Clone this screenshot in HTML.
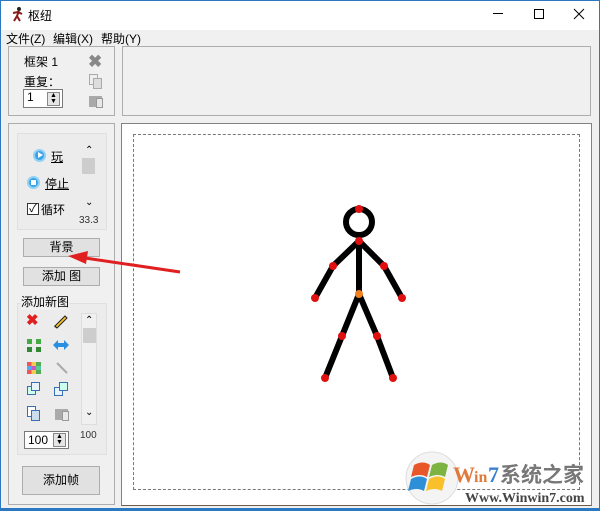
<!DOCTYPE html>
<html><head><meta charset="utf-8">
<style>
*{margin:0;padding:0;box-sizing:border-box}
body{width:600px;height:511px;background:#f0f0f0;position:relative;overflow:hidden;font-family:"Liberation Sans","Noto Sans CJK SC",sans-serif;font-size:12px;color:#000}
.a{position:absolute}
.frame{border:1px solid #adadad}
.btn{position:absolute;background:#e1e1e1;border:1px solid #adadad;text-align:center;font-size:12px}
.spin{position:absolute;background:#fff;border:1px solid #7a7a7a;font-size:12px;padding-left:3px}
.spin i{position:absolute;right:2px;top:2px;width:13px;height:14px;border:1px solid #888;background:#e5e5e5;font-style:normal;font-size:7px;line-height:6px;text-align:center}
</style></head><body>
<div class="a" style="left:0;top:0;width:600px;height:30px;background:#fff"></div>
<div class="a" style="left:0;top:0;width:1px;height:511px;background:#2b79c2"></div>
<div class="a" style="right:0;top:0;width:1px;height:511px;background:#2b79c2"></div>
<div class="a" style="left:0;top:0;width:600px;height:1px;background:#2b79c2"></div>
<div class="a" style="left:0;bottom:0;width:600px;height:3px;background:#2b79c2"></div>
<svg class="a" style="left:10px;top:6px" width="14" height="16"><circle cx="9" cy="3" r="2" fill="#222"/><path d="M9 5 L7 10 L4 15 M7 10 L10 15 M8 6 L3 7 M8 6 L12 8" stroke="#8b1a1a" stroke-width="2" fill="none"/></svg>
<div class="a" style="left:28px;top:7px;font-size:12px">枢纽</div>
<div class="a" style="left:493px;top:13px;width:10px;height:1px;background:#000"></div>
<div class="a" style="left:534px;top:9px;width:10px;height:10px;border:1px solid #000"></div>
<svg class="a" style="left:573px;top:8px" width="12" height="12"><path d="M1 1L11 11M11 1L1 11" stroke="#000" stroke-width="1"/></svg>
<div class="a" style="left:6px;top:30px">文件(Z)</div>
<div class="a" style="left:53px;top:30px">编辑(X)</div>
<div class="a" style="left:101px;top:30px">帮助(Y)</div>

<div class="a frame" style="left:8px;top:46px;width:107px;height:70px"></div>
<div class="a" style="left:24px;top:53px">框架 1</div>
<div class="a" style="left:24px;top:73px">重复：</div>
<div class="spin" style="left:23px;top:89px;width:40px;height:19px">1<i>▲<br>▼</i></div>
<div class="a" style="left:88px;top:53px;color:#888;font-size:17px;font-weight:bold;line-height:17px">✖</div>
<div class="a" style="left:89px;top:74px;width:9px;height:11px;border:1px solid #aaa;background:#eee"></div>
<div class="a" style="left:93px;top:78px;width:9px;height:11px;border:1px solid #aaa;background:#ddd"></div>
<div class="a" style="left:89px;top:96px;width:13px;height:11px;background:#aaa"></div>
<div class="a" style="left:96px;top:98px;width:7px;height:10px;background:#e8e8e8;border:1px solid #999"></div>

<div class="a frame" style="left:122px;top:46px;width:469px;height:70px"></div>

<div class="a frame" style="left:8px;top:123px;width:107px;height:382px"></div>
<div class="a" style="left:17px;top:133px;width:90px;height:97px;border:1px solid #e0e0e0;background:#ececec"></div>
<div class="a" style="left:33px;top:149px;width:13px;height:13px;border-radius:50%;background:#3aa3e8;border:2px solid #8fd0f5"></div>
<div class="a" style="left:38px;top:152px;width:0;height:0;border-left:5px solid #fff;border-top:3.5px solid transparent;border-bottom:3.5px solid transparent"></div>
<div class="a" style="left:51px;top:148px;text-decoration:underline">玩</div>
<div class="a" style="left:27px;top:176px;width:13px;height:13px;border-radius:50%;background:#3aa3e8;border:2px solid #8fd0f5"></div>
<div class="a" style="left:31px;top:180px;width:5px;height:5px;background:#fff"></div>
<div class="a" style="left:45px;top:175px;text-decoration:underline">停止</div>
<div class="a" style="left:27px;top:203px;width:12px;height:12px;border:1px solid #333;background:#fff;font-size:11px;line-height:10px;text-align:center">✓</div>
<div class="a" style="left:41px;top:201px">循环</div>
<div class="a" style="left:85px;top:145px;font-size:10px">⌃</div>
<div class="a" style="left:82px;top:158px;width:13px;height:16px;background:#cdcdcd"></div>
<div class="a" style="left:85px;top:197px;font-size:10px">⌄</div>
<div class="a" style="left:79px;top:215px;font-size:10px;color:#333">33.3</div>

<div class="btn" style="left:23px;top:238px;width:77px;height:19px;line-height:17px">背景</div>
<div class="btn" style="left:23px;top:267px;width:77px;height:19px;line-height:17px">添加 图</div>
<div class="a" style="left:17px;top:303px;width:90px;height:152px;border:1px solid #e0e0e0;background:#ececec"></div>
<div class="a" style="left:21px;top:293px;background:#f0f0f0">添加新图</div>
<div class="a" style="left:26px;top:313px;color:#e02020;font-size:15px;font-weight:bold;line-height:16px">✖</div>
<svg class="a" style="left:52px;top:313px" width="17" height="16"><path d="M3 13 L13 3 L15 5 L5 15 Z" fill="#f4c430" stroke="#222"/><path d="M2 14 L3 13 L5 15 Z" fill="#222"/></svg>
<div class="a" style="left:27px;top:339px;width:5px;height:5px;background:#4a4"></div><div class="a" style="left:36px;top:339px;width:5px;height:5px;background:#4a4"></div>
<div class="a" style="left:27px;top:347px;width:5px;height:5px;background:#383"></div><div class="a" style="left:36px;top:347px;width:5px;height:5px;background:#383"></div>
<svg class="a" style="left:52px;top:338px" width="18" height="14"><path d="M1 7 L6 2 L6 5 L12 5 L12 2 L17 7 L12 12 L12 9 L6 9 L6 12 Z" fill="#2a8fe0"/></svg>
<div class="a" style="left:27px;top:362px;width:14px;height:12px;background:linear-gradient(90deg,#e55 33%,#ec5 33% 66%,#5a5 66%)"></div>
<div class="a" style="left:27px;top:366px;width:14px;height:4px;background:linear-gradient(90deg,#5ae 33%,#c5c 33% 66%,#5c9 66%)"></div>
<svg class="a" style="left:55px;top:361px" width="14" height="14"><path d="M2 2 L12 12" stroke="#aaa" stroke-width="2"/></svg>
<div class="a" style="left:27px;top:386px;width:9px;height:9px;border:1px solid #3a6fb0;background:#cfe"></div><div class="a" style="left:31px;top:382px;width:9px;height:9px;border:1px solid #3a6fb0;background:#e8f2fb"></div>
<div class="a" style="left:54px;top:387px;width:9px;height:9px;border:1px solid #3a6fb0;background:#e8f2fb"></div><div class="a" style="left:59px;top:382px;width:9px;height:9px;border:1px solid #3a6fb0;background:#cfe"></div>
<div class="a" style="left:27px;top:406px;width:9px;height:11px;border:1px solid #3a6fb0;background:#fff"></div><div class="a" style="left:31px;top:410px;width:9px;height:11px;border:1px solid #3a6fb0;background:#cde"></div>
<div class="a" style="left:55px;top:409px;width:13px;height:11px;background:#aaa"></div><div class="a" style="left:62px;top:411px;width:7px;height:10px;background:#e8e8e8;border:1px solid #999"></div>
<div class="a" style="left:81px;top:313px;width:16px;height:112px;border:1px solid #ddd;background:#f0f0f0"></div>
<div class="a" style="left:85px;top:315px;font-size:10px">⌃</div>
<div class="a" style="left:83px;top:328px;width:13px;height:15px;background:#cdcdcd"></div>
<div class="a" style="left:85px;top:407px;font-size:10px">⌄</div>
<div class="spin" style="left:24px;top:431px;width:45px;height:18px;line-height:16px">100<i style="top:1px">▲<br>▼</i></div>
<div class="a" style="left:80px;top:430px;font-size:10px;color:#333">100</div>
<div class="btn" style="left:22px;top:466px;width:78px;height:29px;line-height:27px">添加帧</div>

<div class="a" style="left:121px;top:123px;width:471px;height:383px;border:1px solid #828282;border-bottom-color:#6d5a4a;background:#fff"></div>
<div class="a" style="left:133px;top:134px;width:447px;height:356px;border:1px dashed #777"></div>

<svg class="a" style="left:0;top:0" width="600" height="511">
<g stroke="#000" stroke-width="6" stroke-linecap="round" fill="none">
<circle cx="359" cy="222" r="13"/>
<path d="M359 241 L359 294 M359 241 L333 266 L315 298 M359 241 L384 266 L402 298 M359 294 L342 336 L325 378 M359 294 L377 336 L393 378"/>
</g>
<g fill="#e01010">
<circle cx="359" cy="209" r="4"/><circle cx="359" cy="241" r="4"/><circle cx="333" cy="266" r="4"/><circle cx="384" cy="266" r="4"/><circle cx="315" cy="298" r="4"/><circle cx="402" cy="298" r="4"/><circle cx="342" cy="336" r="4"/><circle cx="377" cy="336" r="4"/><circle cx="325" cy="378" r="4"/><circle cx="393" cy="378" r="4"/>
</g>
<circle cx="359" cy="294" r="4" fill="#f08020"/>
<path d="M180 272 L85 258" stroke="#e02020" stroke-width="3"/>
<path d="M68 256 L88 251 L86 264 Z" fill="#e02020"/>
<circle cx="432" cy="478" r="26" fill="#f4f4f4" stroke="#ddd"/>
<path d="M414 465 q9 -5 16 0 l-3 12 q-7 -4 -16 0z" fill="#e8572a"/>
<path d="M432 465 q9 -5 16 0 l-3 12 q-7 -4 -16 0z" fill="#7cb342"/>
<path d="M411 479 q9 -5 16 0 l-3 12 q-7 -4 -16 0z" fill="#2d8fd8"/>
<path d="M429 479 q9 -5 16 0 l-3 12 q-7 -4 -16 0z" fill="#f9c02b"/>
<text x="453" y="482" font-family="Liberation Serif,serif" font-weight="bold" font-size="22" fill="#e07a3a">W</text>
<text x="474" y="482" font-family="Liberation Serif,serif" font-weight="bold" font-size="16" fill="#e07a3a">in</text>
<text x="488" y="482" font-family="Liberation Serif,serif" font-weight="bold" font-size="22" fill="#3a7fd0">7</text>
<text x="500" y="482" font-family="Noto Sans CJK SC,sans-serif" font-weight="bold" font-size="21" fill="#777">系统之家</text>
<text x="465" y="502" font-family="Liberation Serif,serif" font-weight="bold" font-size="14" fill="#444">Www.Winwin7.com</text>
</svg>
</body></html>
